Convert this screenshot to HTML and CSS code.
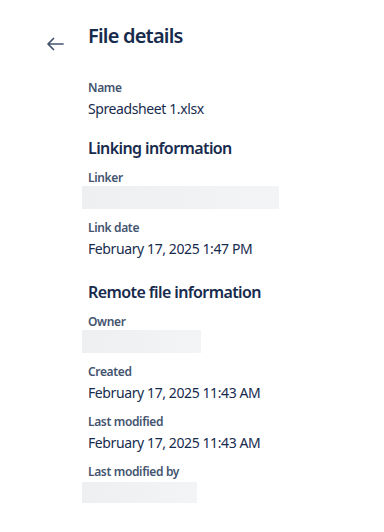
FILE: index.html
```html
<!DOCTYPE html>
<html lang="en">
<head>
    <meta charset="UTF-8">
    <meta name="viewport" content="width=device-width, initial-scale=1.0">
    <link rel="stylesheet" href="styles.css">
</head>
<body>
<div class="page">
    <button class="back-button" aria-label="Back">
        <svg width="24" height="24" viewBox="0 0 24 24" fill="none">
            <path d="M10.5 6.5 5 12l5.5 5.5M5.5 12H20" stroke="#44546f" stroke-width="1.7" stroke-linecap="round" stroke-linejoin="round"/>
        </svg>
    </button>
    <div class="details">
        <h1 class="title">File details</h1>

        <div class="field first">
            <div class="label">Name</div>
            <div class="value">Spreadsheet 1.xlsx</div>
        </div>

        <h2 class="section-title">Linking information</h2>
        <div class="field">
            <div class="label">Linker</div>
            <div class="skeleton" style="width: 197px;"></div>
        </div>
        <div class="field">
            <div class="label">Link date</div>
            <div class="value">February 17, 2025 1:47 PM</div>
        </div>

        <h2 class="section-title remote">Remote file information</h2>
        <div class="field">
            <div class="label">Owner</div>
            <div class="skeleton" style="width: 119px;"></div>
        </div>
        <div class="field">
            <div class="label">Created</div>
            <div class="value">February 17, 2025 11:43 AM</div>
        </div>
        <div class="field">
            <div class="label">Last modified</div>
            <div class="value">February 17, 2025 11:43 AM</div>
        </div>
        <div class="field">
            <div class="label">Last modified by</div>
            <div class="skeleton last" style="width: 115px;"></div>
        </div>
    </div>
</div>
</body>
</html>
```

FILE: styles.css
```css
body {
    font-family: "Segoe UI", "Noto Sans", sans-serif;
    margin: 0;
    background-color: #FFFFFF;
    color: #172b4d;
}

.page {
    display: flex;
    padding-top: 24px;
}

.back-button {
    width: 24px;
    height: 24px;
    margin: 8px 0 0 43px;
    padding: 0;
    border: none;
    background: none;
    cursor: pointer;
}

.details {
    margin-left: 21px;
    display: flex;
    flex-direction: column;
}

.title {
    margin: 0;
    font-size: 20px;
    font-weight: 600;
    line-height: 24px;
    letter-spacing: -0.8px;
}

.section-title {
    margin: 13px 0 12px 0;
    font-size: 16px;
    font-weight: 600;
    line-height: 20px;
    letter-spacing: -0.6px;
}

.section-title.remote {
    margin-top: 12px;
}

.field {
    margin-bottom: 11px;
}

.field.first {
    margin-top: 32px;
    margin-bottom: 6px;
}

.label {
    font-size: 12px;
    font-weight: 600;
    line-height: 16px;
    letter-spacing: -0.35px;
    color: #44546f;
}

.value {
    font-size: 14px;
    line-height: 20px;
    margin-top: 3px;
    letter-spacing: -0.4px;
}

.skeleton {
    height: 23px;
    margin: 0 0 0 -6px;
    background: linear-gradient(90deg, #eeeff1, #f3f4f6);
}

.skeleton.last {
    margin-top: 2px;
    height: 21px;
}
```
